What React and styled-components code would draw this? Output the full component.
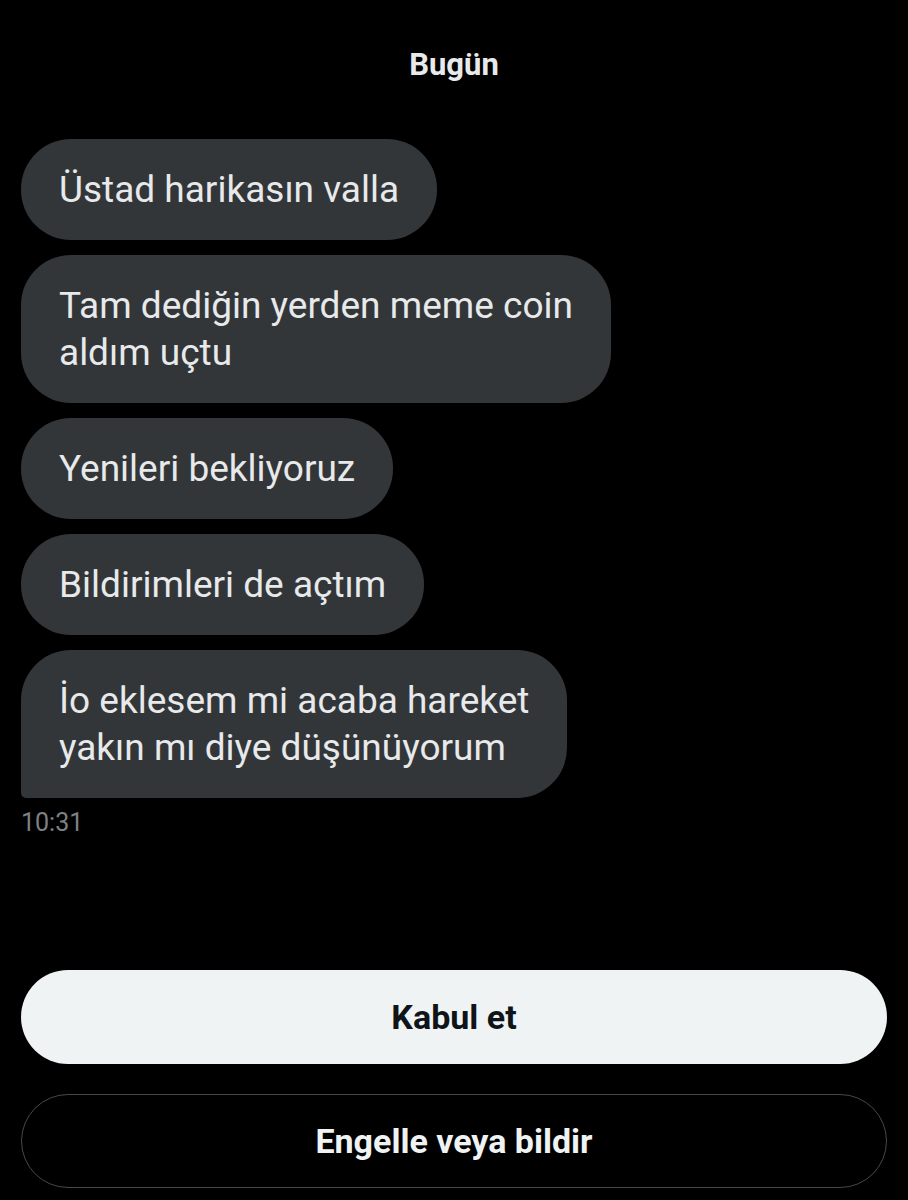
import React from "react";
import styled, { createGlobalStyle } from "styled-components";

const Global = createGlobalStyle`
  html, body { margin: 0; padding: 0; background: #000; }
  body { font-family: Roboto, "Noto Sans", "Liberation Sans", sans-serif; color: #e7e9ea; }
`;

const Page = styled.div`
  width: 908px;
  height: 1200px;
  background: #000;
  display: flex;
  flex-direction: column;
  box-sizing: border-box;
  padding: 0 21px;
`;

const DateLabel = styled.div`
  text-align: center;
  font-weight: 700;
  font-size: 31px;
  line-height: 36px;
  margin-top: 47px;
  margin-bottom: 56px;
  color: #e7e9ea;
`;

const Thread = styled.div`
  display: flex;
  flex-direction: column;
  align-items: flex-start;
  gap: 15px;
`;

const Bubble = styled.div`
  background: #333639;
  color: #e7e9ea;
  font-size: 37px;
  line-height: 47px;
  padding: 27px 38px;
  border-radius: 50px;
  border-bottom-left-radius: ${(p) => (p.$last ? "5px" : "50px")};
  white-space: nowrap;
`;

const Time = styled.div`
  margin-top: 10px;
  font-size: 25px;
  line-height: 30px;
  color: #7d8185;
`;

const Actions = styled.div`
  margin-top: auto;
  margin-bottom: 12px;
  display: flex;
  flex-direction: column;
  gap: 30px;
`;

const Button = styled.button`
  height: 94px;
  border-radius: 47px;
  font-family: Roboto, "Liberation Sans", sans-serif;
  font-weight: 700;
  font-size: 34px;
  background: ${(p) => (p.$primary ? "#eff3f4" : "#000")};
  color: ${(p) => (p.$primary ? "#0f1419" : "#eff3f4")};
  border: ${(p) => (p.$primary ? "none" : "1.5px solid #45484c")};
  cursor: pointer;
`;

const messages = [
  ["Üstad harikasın valla"],
  ["Tam dediğin yerden meme coin", "aldım uçtu"],
  ["Yenileri bekliyoruz"],
  ["Bildirimleri de açtım"],
  ["İo eklesem mi acaba hareket", "yakın mı diye düşünüyorum"],
];

export default function App() {
  return (
    <>
      <Global />
      <Page>
        <DateLabel>Bugün</DateLabel>
        <Thread>
          {messages.map((lines, i) => (
            <Bubble key={i} $last={i === messages.length - 1}>
              {lines.map((l, j) => (
                <React.Fragment key={j}>
                  {j > 0 && <br />}
                  {l}
                </React.Fragment>
              ))}
            </Bubble>
          ))}
        </Thread>
        <Time>10:31</Time>
        <Actions>
          <Button $primary>Kabul et</Button>
          <Button>Engelle veya bildir</Button>
        </Actions>
      </Page>
    </>
  );
}
